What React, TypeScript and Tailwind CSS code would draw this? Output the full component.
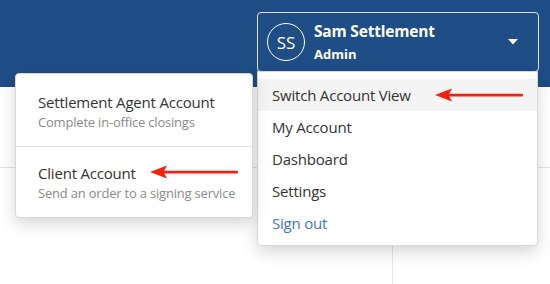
/**
 * Account switcher — header avatar menu + "switch account view" popover.
 */

const font = { fontFamily: '"Open Sans", "Noto Sans", sans-serif' };

function RedArrow({ className }: { className: string }) {
  return (
    <svg className={className} width="90" height="14" viewBox="0 0 90 14" fill="#f3220f">
      <path d="M0 7 L17 0.5 L13.5 7 L17 13.5 Z" />
      <rect x="13" y="5.8" width="75" height="2.6" rx="1" />
    </svg>
  );
}

const menuItems = ["Switch Account View", "My Account", "Dashboard", "Settings"];

export default function App() {
  return (
    <div className="relative w-[550px] h-[284px] overflow-hidden bg-white" style={font}>
      {/* header */}
      <header className="h-[87px] bg-[#1f4d86] flex justify-end pt-[12px] pr-[11px]">
        <div className="relative w-[282px] h-[60px]">
          <button
            type="button"
            className="w-full h-full flex items-center border border-white/85 rounded-[4px] pl-[9px] pr-[20px] text-white"
          >
            <div className="w-[38px] h-[38px] rounded-full border-[1.5px] border-white flex items-center justify-center text-[17px] leading-none">
              SS
            </div>
            <div className="flex-1 ml-[9px] text-left">
              <div className="text-[15.5px] font-bold leading-[22px] tracking-[-0.2px]">Sam Settlement</div>
              <div className="text-[13px] font-bold leading-[20px] mt-[2px]">Admin</div>
            </div>
            <svg width="10" height="6" viewBox="0 0 10 6" fill="white">
              <path d="M0 0 H10 L5 5.5 Z" />
            </svg>
          </button>

          {/* avatar dropdown */}
          <div className="absolute left-0 top-[59px] w-[281px] bg-white border border-[#d8d8d8] rounded-b-[4px] pt-[7px] pb-[6px] shadow-[0_6px_16px_rgba(0,0,0,0.16)] z-10">
            {menuItems.map((item, i) => (
              <div
                key={item}
                className={`relative h-[32px] px-[14px] flex items-center text-[15px] tracking-[-0.2px] text-[#333] ${i === 0 ? "bg-[#f4f4f4]" : ""}`}
              >
                {item}
                {i === 0 && <RedArrow className="absolute left-[177px] top-[9px]" />}
              </div>
            ))}
            <div className="h-[32px] px-[14px] flex items-center text-[15px] tracking-[-0.2px] text-[#3c74dc]">Sign out</div>
          </div>
        </div>
      </header>

      {/* page behind the menus */}
      <div className="h-[81px] border-b border-[#e3e3e3]" />
      <div className="flex h-[116px]">
        <div className="w-[393px] border-r border-[#e3e3e3]" />
        <div className="flex-1" />
      </div>

      {/* switch account popover */}
      <div className="absolute left-[15px] top-[73px] w-[238px] bg-white border border-[#d8d8d8] rounded-[4px] shadow-[0_6px_16px_rgba(0,0,0,0.16)] z-10 whitespace-nowrap">
        <div className="px-[22px] pt-[18px] pb-[14px] border-b border-[#e3e3e3]">
          <div className="text-[15px] leading-[20px] tracking-[-0.2px] text-[#333]">Settlement Agent Account</div>
          <div className="text-[13px] leading-[20px] tracking-[-0.2px] text-[#8a8a8a]">Complete in-office closings</div>
        </div>
        <div className="relative px-[22px] pt-[16px] pb-[14px]">
          <div className="text-[15px] leading-[20px] tracking-[-0.2px] text-[#333]">Client Account</div>
          <div className="text-[13px] leading-[20px] tracking-[-0.2px] text-[#8a8a8a]">Send an order to a signing service</div>
          <RedArrow className="absolute left-[134px] top-[18px]" />
        </div>
      </div>
    </div>
  );
}
